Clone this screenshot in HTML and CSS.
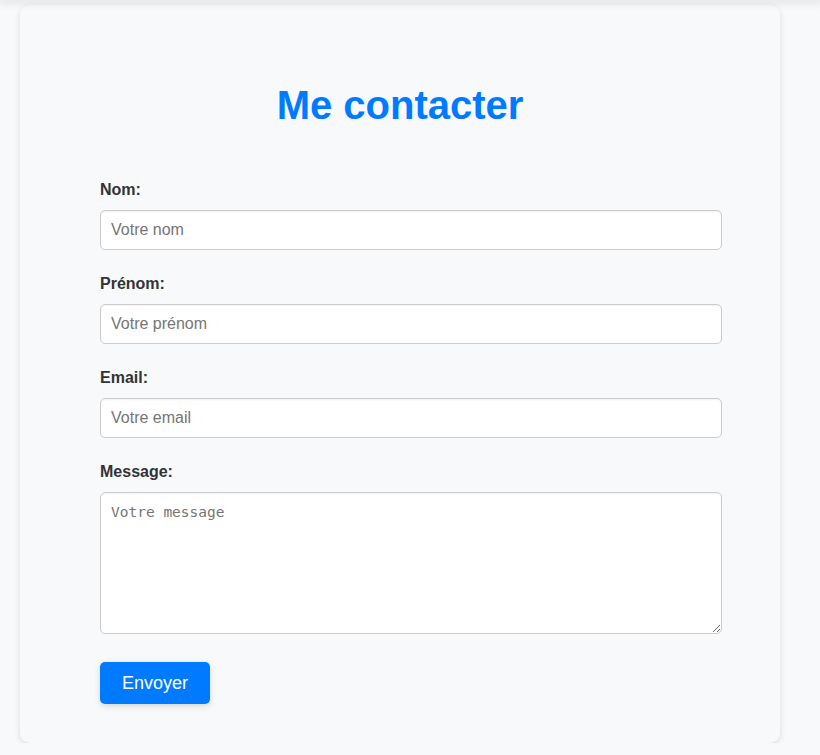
FILE: index.html
```html
<!DOCTYPE html>
<html lang="fr">
<head>
<meta charset="utf-8">
<title>Me contacter</title>
<link rel="stylesheet" href="styles.css">
</head>
<body>
<div class="topbar"></div>
<main class="card">
  <h1 class="title">Me contacter</h1>
  <form class="form">
    <label class="label" for="nom">Nom:</label>
    <input class="field" id="nom" type="text" placeholder="Votre nom">
    <label class="label" for="prenom">Prénom:</label>
    <input class="field" id="prenom" type="text" placeholder="Votre prénom">
    <label class="label" for="email">Email:</label>
    <input class="field" id="email" type="email" placeholder="Votre email">
    <label class="label" for="message">Message:</label>
    <textarea class="field area" id="message" placeholder="Votre message"></textarea>
    <button class="btn" type="button">Envoyer</button>
  </form>
</main>
</body>
</html>
```

FILE: styles.css
```css
html, body {
  margin: 0;
  padding: 0;
  background: #f8f9fa;
  font-family: "Liberation Sans", Arial, sans-serif;
  color: #333;
}
.topbar {
  height: 0;
  box-shadow: 0 0 8px 2px rgba(0, 0, 0, 0.16);
  position: relative;
  z-index: 2;
}
.card {
  width: 600px;
  margin: 5px 0 0 20px;
  padding: 50px 80px 39px;
  background: #f8f9fa;
  border-radius: 10px;
  box-shadow: 0 2px 6px rgba(0, 0, 0, 0.12);
}
.title {
  margin: 27px 0 53px;
  text-align: center;
  color: #007bff;
  font-size: 40px;
  font-weight: bold;
  line-height: 46px;
}
.form {
  margin: 0;
}
.label {
  display: block;
  font-weight: bold;
  font-size: 16px;
  line-height: 18px;
  margin-bottom: 11px;
  color: #333;
}
.field {
  display: block;
  width: 600px;
  padding: 10px;
  box-sizing: content-box;
  height: 18px;
  border: 1px solid #ccc;
  border-radius: 5px;
  font-family: "Liberation Sans", Arial, sans-serif;
  font-size: 16px;
  line-height: 18px;
  color: #333;
  background: #fff;
  margin: 0 0 25px;
  box-shadow: inset 0 1px 2px rgba(0, 0, 0, 0.06);
}
.field::placeholder {
  color: #757575;
}
.area {
  height: 120px;
  font-family: "DejaVu Sans Mono", "Liberation Mono", monospace;
  font-size: 14.5px;
  line-height: 18px;
  resize: vertical;
  margin-bottom: 28px;
}
.btn {
  display: block;
  background: #007bff;
  color: #fff;
  border: none;
  border-radius: 5px;
  padding: 11px 22px;
  font-family: "Liberation Sans", Arial, sans-serif;
  font-size: 18px;
  line-height: 20px;
  cursor: pointer;
  box-shadow: 0 2px 6px rgba(0, 0, 0, 0.15);
}
```
